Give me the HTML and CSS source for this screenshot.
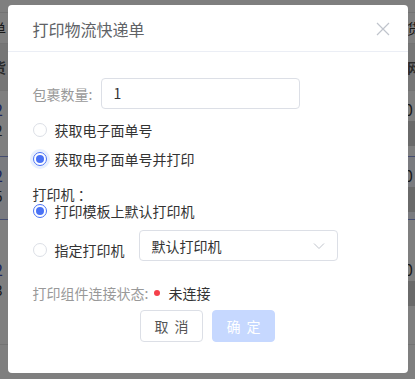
FILE: index.html
```html
<!DOCTYPE html>
<html lang="zh-CN">
<head>
    <meta charset="UTF-8">
    <meta name="viewport" content="width=device-width, initial-scale=1.0">
    <title>打印物流快递单</title>
    <link rel="stylesheet" href="styles.css">
</head>
<body>
    <div class="page">
        <div class="row row-top">
            <span class="cell-left">单</span>
            <span class="cell-right">货</span>
        </div>
        <div class="row row-head">
            <span class="cell-left">货</span>
            <span class="cell-right">网</span>
        </div>
        <div class="row row-data">
            <div class="cell-left">
                <div class="num">2</div>
                <div class="sub">-2</div>
            </div>
            <div class="cell-right">
                <div>0</div>
                <div class="badge"></div>
            </div>
        </div>
        <div class="row row-data row-active">
            <div class="cell-left">
                <div class="num">2</div>
                <div class="sub">-5</div>
            </div>
            <div class="cell-right">
                <div>0</div>
                <div class="badge"></div>
            </div>
        </div>
        <div class="row row-data row-last">
            <div class="cell-left">
                <div class="num">2</div>
                <div class="sub">-3</div>
            </div>
            <div class="cell-right">
                <div>0</div>
                <div class="badge"></div>
            </div>
        </div>
    </div>

    <div class="mask">
        <div class="dialog">
            <div class="dialog-header">
                <span class="dialog-title">打印物流快递单</span>
                <svg class="dialog-close" width="14" height="14" viewBox="0 0 14 14">
                    <path d="M1 1 L13 13 M13 1 L1 13" stroke="#c0c4cc" stroke-width="1.2" fill="none"/>
                </svg>
            </div>
            <div class="dialog-body">
                <div class="form-item">
                    <span class="form-label">包裹数量:</span>
                    <div class="input">1</div>
                </div>
                <div class="radio-row">
                    <span class="radio"></span>
                    <span class="radio-text">获取电子面单号</span>
                </div>
                <div class="radio-row">
                    <span class="radio checked focus"></span>
                    <span class="radio-text">获取电子面单号并打印</span>
                </div>
                <div class="section-label">打印机 ：</div>
                <div class="radio-row radio-row-tight">
                    <span class="radio checked"></span>
                    <span class="radio-text">打印模板上默认打印机</span>
                </div>
                <div class="radio-row radio-row-select">
                    <span class="radio"></span>
                    <span class="radio-text">指定打印机</span>
                    <div class="select">
                        <span>默认打印机</span>
                        <svg width="12" height="8" viewBox="0 0 12 8">
                            <path d="M1 1.5 L6 6.5 L11 1.5" stroke="#c0c4cc" stroke-width="1" fill="none"/>
                        </svg>
                    </div>
                </div>
                <div class="status">
                    <span class="status-label">打印组件连接状态:</span>
                    <span class="dot"></span>
                    <span class="status-text">未连接</span>
                </div>
                <div class="buttons">
                    <button class="btn">取 消</button>
                    <button class="btn btn-primary">确 定</button>
                </div>
            </div>
        </div>
    </div>
</body>
</html>
```

FILE: styles.css
```css
body {
    font-family: "Noto Sans CJK SC", "Noto Sans", sans-serif;
    margin: 0;
    padding: 0;
    background-color: #fff;
    width: 415px;
    height: 379px;
    overflow: hidden;
}
.page {
    font-size: 14px;
    color: #333;
}
.row {
    display: flex;
    justify-content: space-between;
    border-bottom: 1px solid #e6e6e6;
}
.cell-left {
    margin-left: -8px;
}
.cell-right {
    margin-right: -12px;
    width: 20px;
}
.row-top {
    margin-top: 12px;
    border-top: 1px solid #e6e6e6;
    height: 30px;
    align-items: center;
}
.row-head {
    height: 46px;
    align-items: center;
    background-color: #ececec;
    font-weight: bold;
    color: #555;
}
.row-data {
    height: 66px;
    padding-top: 7px;
    box-sizing: border-box;
}
.row-data .num {
    color: #3a4bb8;
    font-size: 16px;
    margin-left: 2px;
    line-height: 22px;
}
.row-data .sub {
    line-height: 20px;
    margin-left: -2px;
}
.row-data .cell-right div:first-child {
    line-height: 22px;
    font-size: 16px;
    margin-left: -3px;
}
.badge {
    width: 16px;
    height: 25px;
    background-color: #d5d5d5;
    border-radius: 3px;
    margin-left: -3px;
    margin-top: 1px;
}
.row-active {
    background-color: #f4f7ff;
    border-top: 1px solid #8a9ae0;
    border-bottom: 1px solid #8a9ae0;
    margin-top: -1px;
    height: 64px;
}
.row-last {
    height: 125px;
    padding-top: 38px;
}
.mask {
    position: fixed;
    top: 0;
    left: 0;
    right: 0;
    bottom: 0;
    background-color: rgba(0, 0, 0, 0.5);
    display: flex;
    justify-content: center;
    align-items: flex-start;
    padding-top: 5px;
}
.dialog {
    width: 400px;
    height: 368px;
    background-color: #fff;
    border-radius: 4px;
    box-sizing: border-box;
}
.dialog-header {
    height: 47px;
    border-bottom: 1px solid #ebeef5;
    display: flex;
    align-items: center;
    justify-content: space-between;
    padding: 0 18px 0 25px;
    box-sizing: border-box;
}
.dialog-title {
    font-size: 16px;
    color: #606266;
    margin-top: 1px;
}
.dialog-close {
    margin-top: 2px;
}
.dialog-body {
    padding: 26px 25px 0 25px;
    font-size: 13px;
}
.form-item {
    display: flex;
    align-items: center;
    height: 31px;
}
.form-label {
    color: #999;
    width: 68px;
    font-size: 14px;
}
.input {
    width: 199px;
    height: 31px;
    border: 1px solid #dcdfe6;
    border-radius: 4px;
    box-sizing: border-box;
    padding-left: 12px;
    line-height: 29px;
    color: #333;
    font-size: 14px;
}
.radio-row {
    display: flex;
    align-items: center;
    height: 29px;
}
.form-item + .radio-row {
    margin-top: 6px;
}
.radio {
    width: 12px;
    height: 12px;
    border: 1px solid #dcdfe6;
    border-radius: 50%;
    margin: 0 8px 0 0;
    flex-shrink: 0;
    position: relative;
}
.radio.checked {
    border-color: #4a72f5;
}
.radio.checked::after {
    content: "";
    position: absolute;
    left: 2px;
    top: 2px;
    width: 8px;
    height: 8px;
    border-radius: 50%;
    background-color: #4a72f5;
}
.radio.focus {
    box-shadow: 0 0 0 3px #e8f0fe;
}
.radio-text {
    color: #333;
    font-size: 14px;
}
.section-label {
    color: #333;
    font-size: 14px;
    margin-top: 13px;
    line-height: 16px;
}
.radio-row-tight {
    height: 18px;
}
.radio-row-tight .radio-text {
    line-height: 16px;
}
.radio-row-select {
    height: 31px;
    margin-top: 10px;
}
.radio-row-select .radio,
.radio-row-select .radio-text {
    margin-top: 8px;
}
.select {
    margin-left: 14px;
    width: 199px;
    height: 31px;
    border: 1px solid #dcdfe6;
    border-radius: 4px;
    box-sizing: border-box;
    display: flex;
    align-items: center;
    justify-content: space-between;
    padding: 0 12px 0 12px;
    color: #333;
    font-size: 14px;
}
.status {
    display: flex;
    align-items: center;
    margin-top: 22px;
    height: 20px;
    font-size: 14px;
}
.status-label {
    color: #999;
}
.dot {
    width: 6px;
    height: 6px;
    border-radius: 50%;
    background-color: #f5404a;
    margin: 0 8px 0 6px;
}
.status-text {
    color: #333;
}
.buttons {
    display: flex;
    justify-content: center;
    gap: 9px;
    margin-top: 7px;
}
.btn {
    width: 63px;
    height: 32px;
    border: 1px solid #dcdfe6;
    border-radius: 4px;
    background-color: #fff;
    color: #555;
    font-family: "Noto Sans CJK SC", sans-serif;
    font-size: 14px;
    word-spacing: 3px;
    padding: 0;
}
.btn-primary {
    background-color: #c6d8ff;
    border-color: #c6d8ff;
    color: #fff;
}
```
